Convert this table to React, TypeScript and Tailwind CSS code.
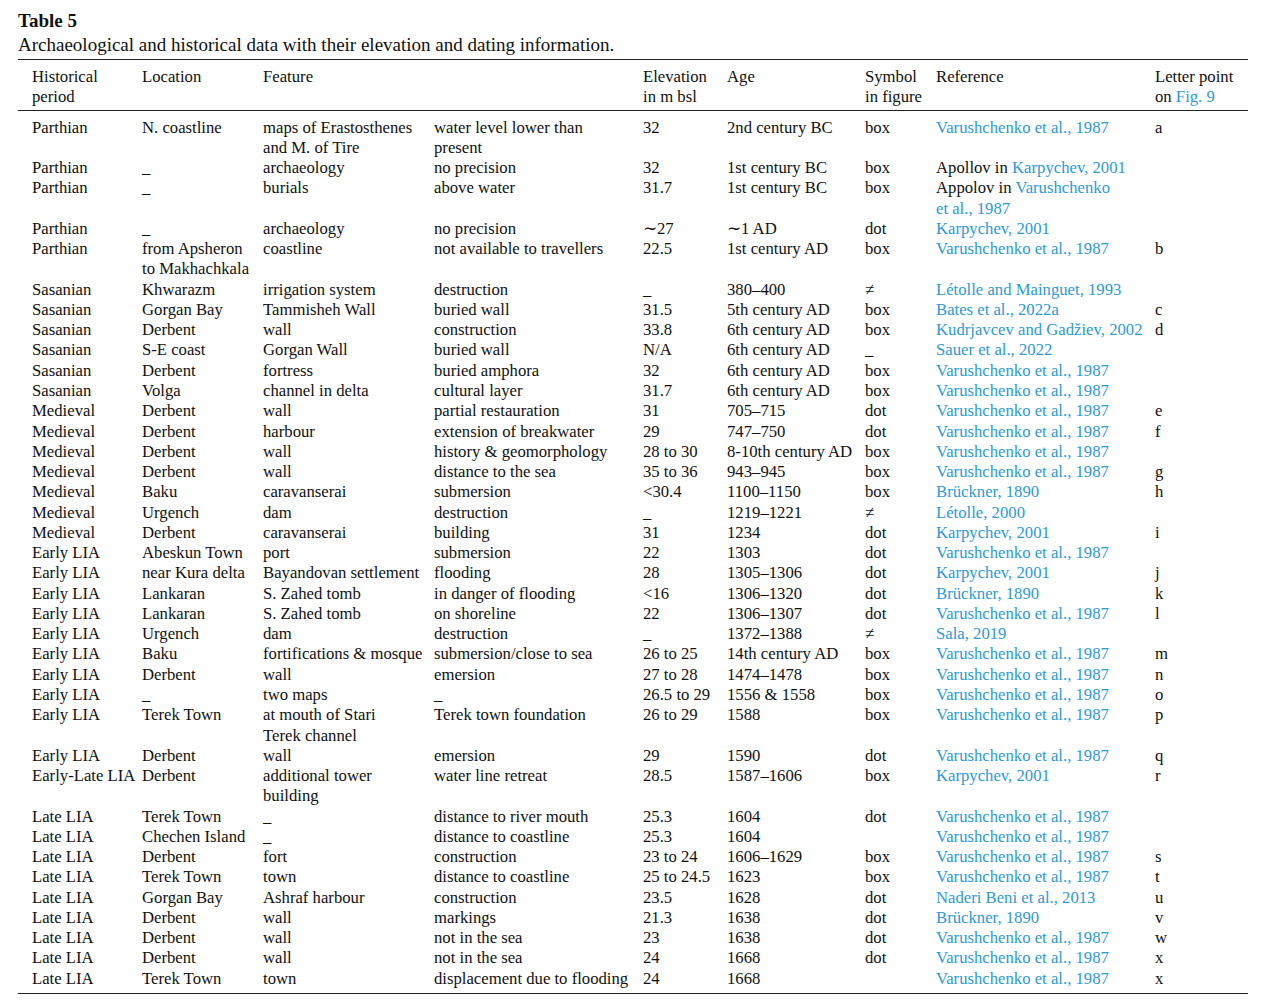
import React from 'react';

type Ref = { pre?: string; link: string };
type Row = [string, string, string, string, string, string, string, Ref, string];

const V: Ref = { link: 'Varushchenko et al., 1987' };
const K: Ref = { link: 'Karpychev, 2001' };
const B: Ref = { link: 'Brückner, 1890' };

const rows: Row[] = [
  ['Parthian', 'N. coastline', 'maps of Erastosthenes\nand M. of Tire', 'water level lower than\npresent', '32', '2nd century BC', 'box', V, 'a'],
  ['Parthian', '_', 'archaeology', 'no precision', '32', '1st century BC', 'box', { pre: 'Apollov in ', link: 'Karpychev, 2001' }, ''],
  ['Parthian', '_', 'burials', 'above water', '31.7', '1st century BC', 'box', { pre: 'Appolov in ', link: 'Varushchenko\net al., 1987' }, ''],
  ['Parthian', '_', 'archaeology', 'no precision', '∼27', '∼1 AD', 'dot', K, ''],
  ['Parthian', 'from Apsheron\nto Makhachkala', 'coastline', 'not available to travellers', '22.5', '1st century AD', 'box', V, 'b'],
  ['Sasanian', 'Khwarazm', 'irrigation system', 'destruction', '_', '380–400', '≠', { link: 'Létolle and Mainguet, 1993' }, ''],
  ['Sasanian', 'Gorgan Bay', 'Tammisheh Wall', 'buried wall', '31.5', '5th century AD', 'box', { link: 'Bates et al., 2022a' }, 'c'],
  ['Sasanian', 'Derbent', 'wall', 'construction', '33.8', '6th century AD', 'box', { link: 'Kudrjavcev and Gadžiev, 2002' }, 'd'],
  ['Sasanian', 'S-E coast', 'Gorgan Wall', 'buried wall', 'N/A', '6th century AD', '_', { link: 'Sauer et al., 2022' }, ''],
  ['Sasanian', 'Derbent', 'fortress', 'buried amphora', '32', '6th century AD', 'box', V, ''],
  ['Sasanian', 'Volga', 'channel in delta', 'cultural layer', '31.7', '6th century AD', 'box', V, ''],
  ['Medieval', 'Derbent', 'wall', 'partial restauration', '31', '705–715', 'dot', V, 'e'],
  ['Medieval', 'Derbent', 'harbour', 'extension of breakwater', '29', '747–750', 'dot', V, 'f'],
  ['Medieval', 'Derbent', 'wall', 'history & geomorphology', '28 to 30', '8-10th century AD', 'box', V, ''],
  ['Medieval', 'Derbent', 'wall', 'distance to the sea', '35 to 36', '943–945', 'box', V, 'g'],
  ['Medieval', 'Baku', 'caravanserai', 'submersion', '<30.4', '1100–1150', 'box', B, 'h'],
  ['Medieval', 'Urgench', 'dam', 'destruction', '_', '1219–1221', '≠', { link: 'Létolle, 2000' }, ''],
  ['Medieval', 'Derbent', 'caravanserai', 'building', '31', '1234', 'dot', K, 'i'],
  ['Early LIA', 'Abeskun Town', 'port', 'submersion', '22', '1303', 'dot', V, ''],
  ['Early LIA', 'near Kura delta', 'Bayandovan settlement', 'flooding', '28', '1305–1306', 'dot', K, 'j'],
  ['Early LIA', 'Lankaran', 'S. Zahed tomb', 'in danger of flooding', '<16', '1306–1320', 'dot', B, 'k'],
  ['Early LIA', 'Lankaran', 'S. Zahed tomb', 'on shoreline', '22', '1306–1307', 'dot', V, 'l'],
  ['Early LIA', 'Urgench', 'dam', 'destruction', '_', '1372–1388', '≠', { link: 'Sala, 2019' }, ''],
  ['Early LIA', 'Baku', 'fortifications & mosque', 'submersion/close to sea', '26 to 25', '14th century AD', 'box', V, 'm'],
  ['Early LIA', 'Derbent', 'wall', 'emersion', '27 to 28', '1474–1478', 'box', V, 'n'],
  ['Early LIA', '_', 'two maps', '_', '26.5 to 29', '1556 & 1558', 'box', V, 'o'],
  ['Early LIA', 'Terek Town', 'at mouth of Stari\nTerek channel', 'Terek town foundation', '26 to 29', '1588', 'box', V, 'p'],
  ['Early LIA', 'Derbent', 'wall', 'emersion', '29', '1590', 'dot', V, 'q'],
  ['Early-Late LIA', 'Derbent', 'additional tower\nbuilding', 'water line retreat', '28.5', '1587–1606', 'box', K, 'r'],
  ['Late LIA', 'Terek Town', '_', 'distance to river mouth', '25.3', '1604', 'dot', V, ''],
  ['Late LIA', 'Chechen Island', '_', 'distance to coastline', '25.3', '1604', '', V, ''],
  ['Late LIA', 'Derbent', 'fort', 'construction', '23 to 24', '1606–1629', 'box', V, 's'],
  ['Late LIA', 'Terek Town', 'town', 'distance to coastline', '25 to 24.5', '1623', 'box', V, 't'],
  ['Late LIA', 'Gorgan Bay', 'Ashraf harbour', 'construction', '23.5', '1628', 'dot', { link: 'Naderi Beni et al., 2013' }, 'u'],
  ['Late LIA', 'Derbent', 'wall', 'markings', '21.3', '1638', 'dot', B, 'v'],
  ['Late LIA', 'Derbent', 'wall', 'not in the sea', '23', '1638', 'dot', V, 'w'],
  ['Late LIA', 'Derbent', 'wall', 'not in the sea', '24', '1668', 'dot', V, 'x'],
  ['Late LIA', 'Terek Town', 'town', 'displacement due to flooding', '24', '1668', '', V, 'x'],
];

const cols = 'grid grid-cols-[110px_121px_171px_209px_84px_138px_71px_219px_93px] pl-[14px]';

// reference cell: optional plain prefix, then blue link text, wrapped onto lines at '\n'
const RefCell: React.FC<{ r: Ref }> = ({ r }) => {
  const [first, ...rest] = r.link.split('\n');
  return (
    <div>
      <div>
        {r.pre}
        <span className="text-[#2e9ad8]">{first}</span>
      </div>
      {rest.map((l, i) => (
        <div key={i} className="text-[#2e9ad8]">{l}</div>
      ))}
    </div>
  );
};

const App: React.FC = () => {
  return (
    <div className="w-full min-h-screen bg-white text-[#111] font-['Liberation_Serif',serif] text-[16.7px] leading-[20.26px] pt-[9px] pl-[18px]">
      {/* Caption */}
      <div className="text-[19px] leading-[24px]">
        <div className="font-bold">Table 5</div>
        <div>Archaeological and historical data with their elevation and dating information.</div>
      </div>

      <div className="w-[1230px] mt-[2px] border-t border-b border-[#222]">
        {/* Header */}
        <div className={`${cols} pt-[7px] pb-[2px] border-b border-[#222]`}>
          <div>Historical<br />period</div>
          <div>Location</div>
          <div>Feature</div>
          <div></div>
          <div>Elevation<br />in m bsl</div>
          <div>Age</div>
          <div>Symbol<br />in figure</div>
          <div>Reference</div>
          <div>Letter point<br />on <span className="text-[#2e9ad8]">Fig. 9</span></div>
        </div>

        {/* Body */}
        <div className="pt-[7px] pb-[4px]">
          {rows.map((r, i) => (
            <div key={i} className={`${cols} whitespace-pre`}>
              <div>{r[0]}</div>
              <div>{r[1]}</div>
              <div>{r[2]}</div>
              <div>{r[3]}</div>
              <div>{r[4]}</div>
              <div>{r[5]}</div>
              <div>{r[6]}</div>
              <RefCell r={r[7]} />
              <div>{r[8]}</div>
            </div>
          ))}
        </div>
      </div>
    </div>
  );
};

export default App;
